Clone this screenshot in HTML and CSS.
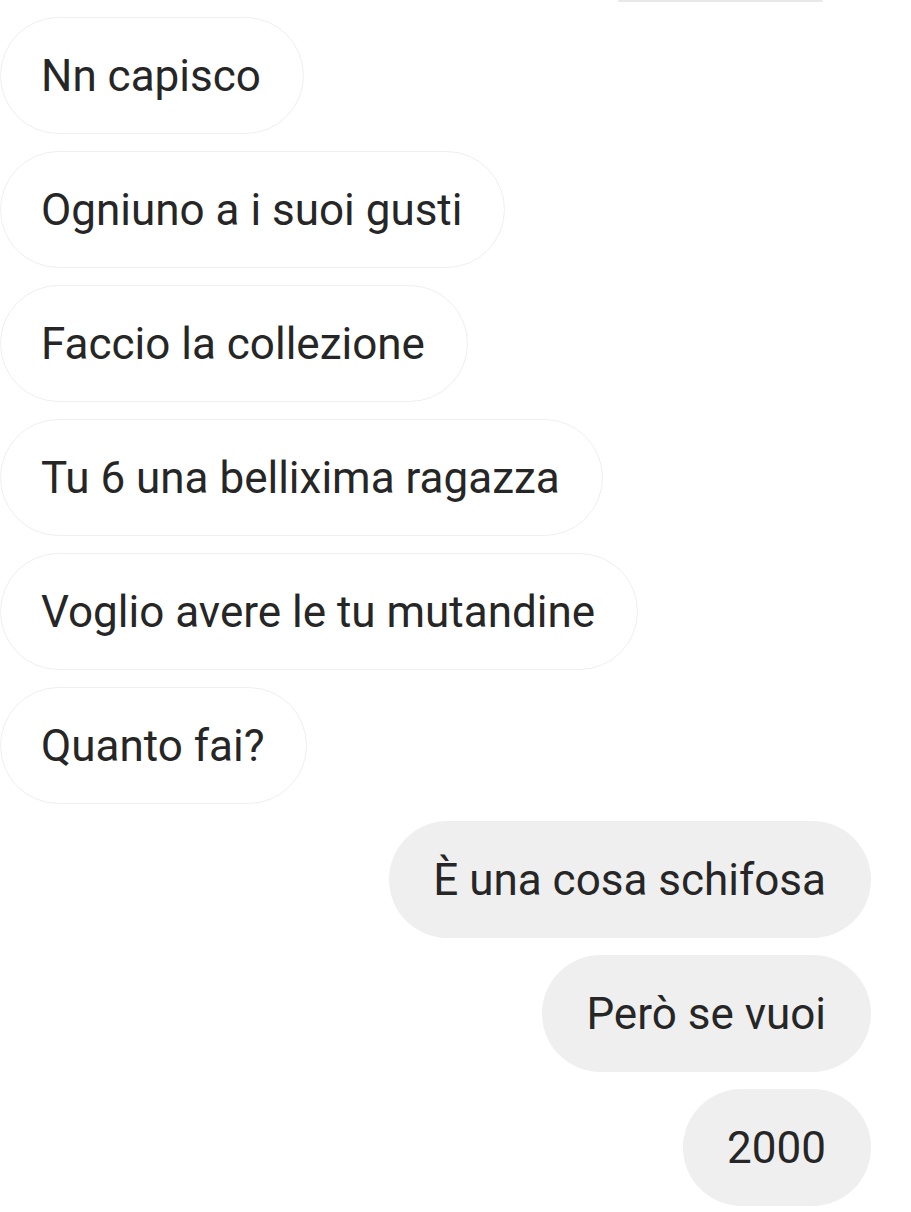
FILE: index.html
```html
<!DOCTYPE html>
<html lang="it">
<head>
  <meta charset="UTF-8">
  <meta name="viewport" content="width=device-width, initial-scale=1.0">
  <title>Chat</title>
  <link rel="stylesheet" href="styles.css">
</head>
<body>
  <div class="edge"></div>
  <div class="thread">
    <div class="msg them">Nn capisco</div>
    <div class="msg them">Ogniuno a i suoi gusti</div>
    <div class="msg them">Faccio la collezione</div>
    <div class="msg them">Tu 6 una bellixima ragazza</div>
    <div class="msg them">Voglio avere le tu mutandine</div>
    <div class="msg them">Quanto fai?</div>
    <div class="msg me">È una cosa schifosa</div>
    <div class="msg me">Però se vuoi</div>
    <div class="msg me">2000</div>
  </div>
</body>
</html>
```

FILE: styles.css
```css
body {
  margin: 0;
  background-color: #ffffff;
  font-family: Roboto, "Liberation Sans", Arial, sans-serif;
  color: #262626;
  overflow: hidden;
}
.edge {
  width: 205px;
  height: 2px;
  margin-left: 618px;
  background-color: #e8e8e8;
  border-radius: 1px;
}
.thread {
  display: flex;
  flex-direction: column;
  gap: 17px;
  padding: 15px 0 0 0;
}
.msg {
  font-size: 44px;
  line-height: 52px;
  padding: 31.5px 42px 31.5px 40px;
  border-radius: 60px;
  white-space: nowrap;
}
.them {
  align-self: flex-start;
  border: 1.5px solid #efefef;
  background-color: #ffffff;
}
.me {
  align-self: flex-end;
  margin-right: 40px;
  padding: 32.5px 45px 32.5px 44px;
  background-color: #efefef;
}
```
